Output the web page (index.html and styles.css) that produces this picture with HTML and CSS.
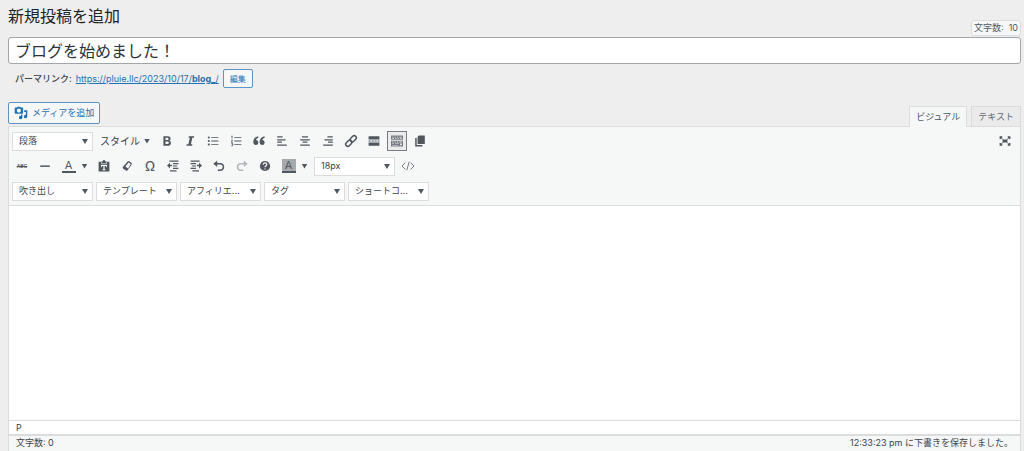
FILE: index.html
```html
<!DOCTYPE html>
<html lang="ja">
<head>
    <meta charset="UTF-8">
    <meta name="viewport" content="width=device-width, initial-scale=1.0">
    <title>新規投稿を追加</title>
    <link rel="stylesheet" href="styles.css">
</head>
<body>
    <header class="page-header">
        <h1 class="page-title">新規投稿を追加</h1>
        <span class="title-count">文字数:&nbsp; 10</span>
    </header>

    <input class="title-input" type="text" aria-label="タイトル" value="ブログを始めました！">

    <div class="permalink">
        <strong>パーマリンク:</strong>
        <a href="https://pluie.llc/2023/10/17/blog_/">https://pluie.llc/2023/10/17/<b>blog_</b>/</a>
        <button class="button edit-button" type="button">編集</button>
    </div>

    <div class="editor-tools">
        <button class="button media-button" type="button">
            <svg width="14" height="14" viewBox="0 0 20 20"><path fill="currentColor" fill-rule="evenodd" d="M2 2h2l1-1h4l1 1h2q1 0 1 1v7q0 1-1 1H2q-1 0-1-1V3q0-1 1-1zM7 3.500a3 3 0 1 0 0 6a3 3 0 1 0 0-6zM14.500 6H19v9a2.500 2.500 0 1 1-2-2.400V8.500h-2.500zM12 12v4.500a2.500 2.500 0 1 1-2-2.400V12z"/></svg>
            メディアを追加
        </button>
        <div class="tabs">
            <button class="tab active" type="button">ビジュアル</button>
            <button class="tab" type="button">テキスト</button>
        </div>
    </div>

    <main class="editor">
        <div class="toolbar">
            <div class="toolbar-row">
                <select class="list-box" aria-label="段落"><option>段落</option></select>
                <button class="tool style-menu" type="button">スタイル <i class="caret"></i></button>
                <button class="tool" type="button" aria-label="太字"><svg viewBox="0 0 20 20"><path fill-rule="evenodd" d="M4 2h7c3.300 0 5 1.400 5 4 0 1.700-.8 2.900-2.200 3.500 1.800.5 2.800 1.900 2.800 3.800 0 3-2 4.700-5.400 4.700H4zM7.500 4.700v3.700h2.800c1.500 0 2.200-.7 2.200-1.900s-.7-1.800-2.200-1.800zM7.500 11v4.200h3.100c1.600 0 2.400-.8 2.400-2.200s-.8-2-2.400-2z"/></svg></button>
                <button class="tool" type="button" aria-label="イタリック"><svg viewBox="0 0 20 20"><path d="M8 2h9l-.5 2.500h-2.600l-2.400 11H14l-.5 2.500H4l.5-2.500h2.800l2.400-11H7.400z"/></svg></button>
                <button class="tool" type="button" aria-label="番号なしリスト"><svg viewBox="0 0 20 20"><path d="M7 3.300h12v1.400H7zM7 9.300h12v1.400H7zM7 15.300h12v1.400H7z"/><circle cx="3" cy="4" r="1.700"/><circle cx="3" cy="10" r="1.700"/><circle cx="3" cy="16" r="1.700"/></svg></button>
                <button class="tool" type="button" aria-label="番号付きリスト"><svg viewBox="0 0 20 20"><path d="M7 3.300h12v1.400H7zM7 9.300h12v1.400H7zM7 15.300h12v1.400H7z"/><path class="line thin" d="M2 2.500l1.500-1V6M2 8.500h2v1L2 12h3M2 14h2.500v4H2M3 16h1.500"/></svg></button>
                <button class="tool" type="button" aria-label="引用"><svg viewBox="0 0 20 20"><path d="M9 4.500C6.500 5.300 5.200 6.500 5.200 8.500a4.200 4.200 0 1 1-4.700 4.200C.2 7 3.500 3 8.500 2zM19.500 4.500c-2.500.8-3.800 2-3.800 4a4.200 4.200 0 1 1-4.700 4.200C10.700 7 14 3 19 2z"/></svg></button>
                <button class="tool" type="button" aria-label="左寄せ"><svg viewBox="0 0 20 20"><path d="M2 2h9v2H2zM2 7h14v2H2zM2 11h8v2H2zM2 16h16v2H2z"/></svg></button>
                <button class="tool" type="button" aria-label="中央揃え"><svg viewBox="0 0 20 20"><path d="M5 2h10v2H5zM2 7h16v2H2zM6 11h8v2H6zM2 16h16v2H2z"/></svg></button>
                <button class="tool" type="button" aria-label="右寄せ"><svg viewBox="0 0 20 20"><path d="M9 2h9v2H9zM4 7h14v2H4zM10 11h8v2h-8zM2 16h16v2H2z"/></svg></button>
                <button class="tool" type="button" aria-label="リンク"><svg viewBox="0 0 20 20"><g class="line" transform="rotate(-45 10 10)"><rect x="-1" y="6.500" width="11.500" height="7" rx="3.500"/><rect x="9.500" y="6.500" width="11.500" height="7" rx="3.500"/></g></svg></button>
                <button class="tool" type="button" aria-label="「続きを読む」タグ"><svg viewBox="0 0 20 20"><path d="M1 2h18v5.500H1zM1 9h3.500v2H1zM6 9h3.500v2H6zM11 9h3.500v2H11zM16 9h3v2h-3zM1 12.500h18V18H1z"/></svg></button>
                <button class="tool pressed" type="button" aria-label="ツールバー切り替え"><svg viewBox="0 0 20 20"><path fill-rule="evenodd" d="M0 1h20v7H0zM2 3v1h2V3zM6 3v1h2V3zM10 3v1h2V3zM14 3v1h4V3zM2 5.500v1h3v-1zM7 5.500v1h2v-1zM11 5.500v1h2v-1zM15 5.500v1h3v-1zM0 9.500h20V19H0zM2 11v1.500h2V11zM6 11v1.500h2V11zM10 11v1.500h2V11zM14 11v1.500h4V11zM2 14v1h3v-1zM7 14v1h6v-1zM15 14v3h3v-3zM2 16.500v1h10v-1z"/></svg></button>
                <button class="tool" type="button" aria-label="複製"><svg viewBox="0 0 20 20"><path d="M8 1h10v14H6V3zM2 5h2.500v11.500H14V19H2z"/></svg></button>
                <button class="tool fullscreen" type="button" aria-label="集中執筆モード"><svg viewBox="0 0 20 20"><path d="M6 7.500h8v5H6zM1 2h4.500v2L3 6.500H1zM19 2h-4.500v2L17 6.500h2zM1 18h4.500v-2L3 13.500H1zM19 18h-4.500v-2l2.500-2.500h2z"/><path class="line thin" d="M3 4l4 4M17 4l-4 4M3 16l4-4M17 16l-4-4"/></svg></button>
            </div>

            <div class="toolbar-row">
                <button class="tool strike" type="button" aria-label="打ち消し"><s>ABC</s></button>
                <button class="tool" type="button" aria-label="横ライン"><svg viewBox="0 0 20 20"><path d="M2 9h16v2.500H2z"/></svg></button>
                <button class="tool color-menu" type="button" aria-label="テキスト色"><span class="swatch">A</span><i class="caret"></i></button>
                <button class="tool" type="button" aria-label="テキストとしてペースト"><svg viewBox="0 0 20 20"><path fill-rule="evenodd" d="M6 2h2q0-2 2-2t2 2h2v3H6zM1 3h4v3h10V3h4v16H1zM5 8v3.500h1.500V10H9v5.500H7.500V17h5v-1.500H11V10h2.500v1.500H15V8z"/></svg></button>
                <button class="tool" type="button" aria-label="書式設定をクリア"><svg viewBox="0 0 20 20"><path fill-rule="evenodd" d="M11.500 2q1-1 2 0l4 3q1 1 .3 2.500L11 17q-1.200 1.500-2.800.7l-4.500-3.200q-1.700-1.500-.5-3.200zM12.700 4.200L7.200 10.800l4.600 3.500 4.500-7.500z"/></svg></button>
                <button class="tool omega" type="button" aria-label="特殊文字">Ω</button>
                <button class="tool" type="button" aria-label="インデントを減らす"><svg viewBox="0 0 20 20"><path d="M4 1h15v2H4zM10 5h9v2h-9zM10 9h7v2h-7zM10 13h9v2h-9zM5 17h11v2H5zM0 9l5-4.500V8h3.500v2.500H5v3.500z"/></svg></button>
                <button class="tool" type="button" aria-label="インデントを増やす"><svg viewBox="0 0 20 20"><path d="M1 1h15v2H1zM1 5h9v2H1zM3 9h7v2H3zM1 13h9v2H1zM4 17h11v2H4zM20 9l-5-4.500V8h-3.500v2.500H15v3.500z"/></svg></button>
                <button class="tool" type="button" aria-label="取り消し"><svg viewBox="0 0 20 20"><path d="M7 1v4h5c9 0 9 13.500 0 13.500H8V16h4c5.500 0 5.500-8.300 0-8.300H7v4L.5 6.300z"/></svg></button>
                <button class="tool" type="button" aria-label="やり直し" disabled><svg viewBox="0 0 20 20"><path d="M13 1v4H8c-9 0-9 13.500 0 13.500h4V16H8c-5.500 0-5.500-8.300 0-8.300h5v4l6.500-5.400z"/></svg></button>
                <button class="tool" type="button" aria-label="ヘルプ"><svg viewBox="0 0 20 20"><circle cx="10" cy="10" r="8.500"/><path class="line light" d="M7 8c0-4 6-4 6-.5 0 2-3 2.200-3 4.500M10 14v2"/></svg></button>
                <button class="tool color-menu back-color" type="button" aria-label="背景色"><span class="swatch">A</span><i class="caret"></i></button>
                <select class="list-box" aria-label="フォントサイズ"><option>18px</option></select>
                <button class="tool" type="button" aria-label="ソースコード"><svg viewBox="0 0 20 20"><path class="line thin" d="M5.500 4.500L0 10l5.500 5.500M14.500 4.500L20 10l-5.500 5.500M12 3L8 17"/></svg></button>
            </div>

            <div class="toolbar-row">
                <select class="list-box" aria-label="吹き出し"><option>吹き出し</option></select>
                <select class="list-box" aria-label="テンプレート"><option>テンプレート</option></select>
                <select class="list-box" aria-label="アフィリエイト"><option>アフィリエ...</option></select>
                <select class="list-box" aria-label="タグ"><option>タグ</option></select>
                <select class="list-box" aria-label="ショートコード"><option>ショートコ...</option></select>
            </div>
        </div>

        <div class="content" contenteditable="true" role="textbox" aria-label="本文"></div>
        <div class="path">P</div>
    </main>

    <footer class="status-bar">
        <span>文字数: 0</span>
        <span>12:33:23 pm に下書きを保存しました。</span>
    </footer>
</body>
</html>
```
FILE: styles.css
```css
* {
    box-sizing: border-box;
}

body {
    margin: 0;
    padding: 0 3px 0 8px;
    min-height: 100vh;
    display: flex;
    flex-direction: column;
    background: #eeeeee;
    color: #3c434a;
    font-family: Inter, "Noto Sans CJK JP", sans-serif;
    font-size: 9px;
    line-height: 14px;
}

button,
input,
select {
    margin: 0;
    font: inherit;
    color: inherit;
}

button {
    cursor: pointer;
}

.page-header {
    display: flex;
    justify-content: space-between;
    align-items: flex-end;
    height: 36px;
    margin-bottom: 1px;
}

.page-title {
    margin: 0;
    padding-bottom: 8px;
    font-size: 16px;
    line-height: 24px;
    font-weight: 400;
    color: #1d2327;
}

.title-count {
    padding: 0 2px;
    border: 1px solid #dcdcde;
    border-radius: 3px;
    background: #f6f7f7;
    color: #50575e;
    white-space: nowrap;
}

.title-input {
    width: 100%;
    height: 27px;
    padding: 0 6px 2px;
    border: 1px solid #a2a5a9;
    border-radius: 3px;
    background: #fff;
    color: #2c3338;
    font-size: 16px;
}

.permalink {
    display: flex;
    align-items: center;
    gap: 4px;
    padding: 5px 7px 0;
}

.permalink strong {
    font-weight: 500;
}

.permalink a {
    color: #2271b1;
}

.button {
    border: 1px solid #5b94c4;
    border-radius: 2px;
    background: #f6f7f7;
    color: #2271b1;
}

.edit-button {
    height: 19px;
    padding: 0 6px;
    font-size: 8px;
}

.editor-tools {
    display: flex;
    justify-content: space-between;
    padding-top: 14px;
}

.media-button {
    display: flex;
    align-items: center;
    gap: 4px;
    height: 22px;
    padding: 0 5px;
}

.tabs {
    display: flex;
    align-items: flex-end;
    gap: 4px;
    padding-top: 4px;
}

.tab {
    height: 20px;
    padding: 0 6px;
    border: 1px solid #dcdcde;
    border-bottom: 0;
    background: #ebebeb;
    color: #646970;
}

/* the open tab covers the top edge of the editor */
.tab.active {
    height: 21px;
    margin-bottom: -1px;
    background: #f6f7f7;
    color: #50575e;
    z-index: 1;
}

.editor {
    flex: 1;
    display: flex;
    flex-direction: column;
    border: 1px solid #dcdcde;
    border-bottom: 0;
    background: #fff;
}

.toolbar {
    display: flex;
    flex-direction: column;
    gap: 5px;
    padding: 4px 3px;
    border-bottom: 1px solid #dcdcde;
    background: #f6f7f7;
}

.toolbar-row {
    display: flex;
    align-items: center;
    gap: 3px;
    height: 20px;
}

.list-box {
    appearance: none;
    width: 81px;
    height: 19px;
    padding: 0 14px 0 6px;
    border: 1px solid #dcdcde;
    border-radius: 0;
    background: #fff url("data:image/svg+xml,%3Csvg xmlns='http://www.w3.org/2000/svg' width='6' height='5'%3E%3Cpath d='M0 0h6L3 5z' fill='%2350575e'/%3E%3C/svg%3E") no-repeat right 4px center;
    line-height: 16px;
}

.tool {
    display: flex;
    align-items: center;
    justify-content: center;
    flex: none;
    width: 20px;
    height: 20px;
    padding: 0;
    border: 1px solid transparent;
    background: none;
    color: #50575e;
}

.tool svg {
    width: 12px;
    height: 12px;
    fill: currentColor;
    overflow: visible;
}

.tool .line {
    fill: none;
    stroke: currentColor;
    stroke-width: 2.5;
}

.tool .thin {
    stroke-width: 1.3;
}

.tool .light {
    stroke: #fff;
    stroke-width: 2;
}

.tool:disabled {
    color: #b4b8bb;
}

.tool.pressed {
    border-color: #787c82;
    background: #ebebeb;
    color: #787c82;
}

.tool.pressed svg {
    width: 14px;
}

.fullscreen {
    margin-left: auto;
    margin-right: 2px;
}

.caret {
    width: 6px;
    height: 5px;
    background: #50575e;
    clip-path: polygon(0 0, 100% 0, 50% 100%);
}

.style-menu {
    width: 58px;
    gap: 4px;
    color: #3c434a;
    font-size: 10px;
}

.strike {
    font-size: 5px;
    font-weight: 600;
}

.omega {
    font-size: 13px;
    font-weight: 500;
}

.color-menu {
    width: 33px;
    gap: 6px;
}

.swatch {
    width: 14px;
    height: 14px;
    border-bottom: 2px solid #50575e;
    font-size: 11px;
    line-height: 12px;
}

.back-color .swatch {
    background: #a7aaad;
}

.content {
    flex: 1;
    outline: 0;
}

.path {
    padding: 0 7px;
    border-top: 1px solid #dcdcde;
    line-height: 13px;
}

.status-bar {
    display: flex;
    justify-content: space-between;
    padding: 0 7px 1px;
    border: 1px solid #dcdcde;
    border-top-width: 2px;
    border-bottom: 0;
    background: #f6f7f7;
}
```
